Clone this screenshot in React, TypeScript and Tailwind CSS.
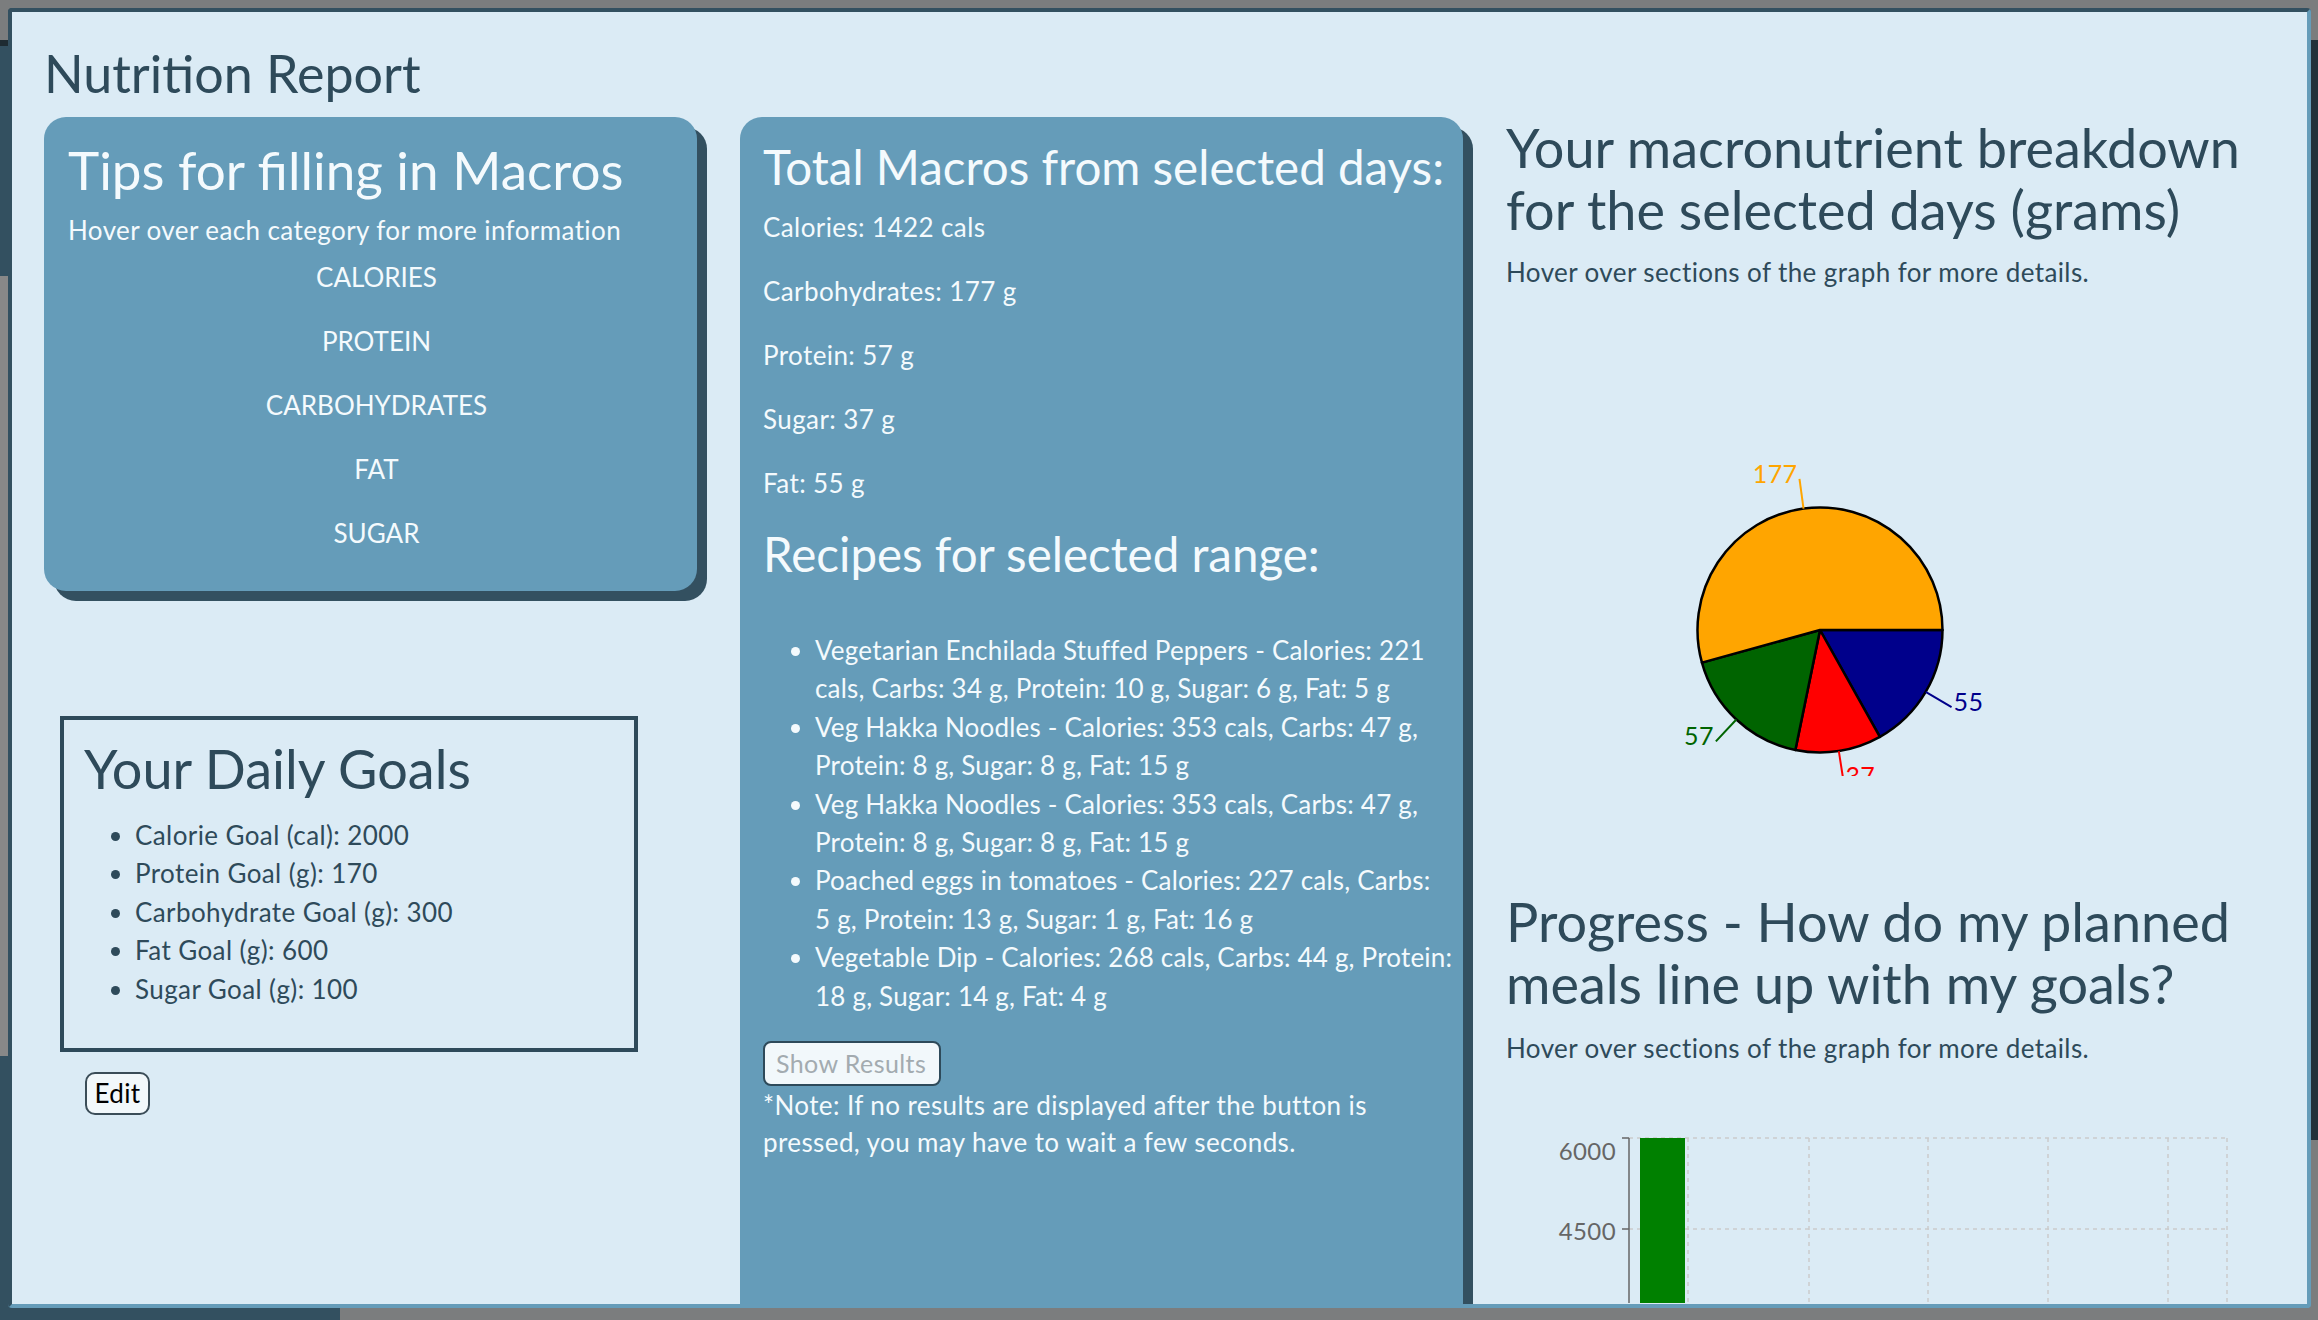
import React from 'react';

const CATEGORIES = ['CALORIES', 'PROTEIN', 'CARBOHYDRATES', 'FAT', 'SUGAR'];

const TOTALS = ['Calories: 1422 cals', 'Carbohydrates: 177 g', 'Protein: 57 g', 'Sugar: 37 g', 'Fat: 55 g'];

const GOALS = [
  'Calorie Goal (cal): 2000',
  'Protein Goal (g): 170',
  'Carbohydrate Goal (g): 300',
  'Fat Goal (g): 600',
  'Sugar Goal (g): 100',
];

// each recipe is split where the reference wraps it
const RECIPES = [
  ['Vegetarian Enchilada Stuffed Peppers - Calories: 221', 'cals, Carbs: 34 g, Protein: 10 g, Sugar: 6 g, Fat: 5 g'],
  ['Veg Hakka Noodles - Calories: 353 cals, Carbs: 47 g,', 'Protein: 8 g, Sugar: 8 g, Fat: 15 g'],
  ['Veg Hakka Noodles - Calories: 353 cals, Carbs: 47 g,', 'Protein: 8 g, Sugar: 8 g, Fat: 15 g'],
  ['Poached eggs in tomatoes - Calories: 227 cals, Carbs:', '5 g, Protein: 13 g, Sugar: 1 g, Fat: 16 g'],
  ['Vegetable Dip - Calories: 268 cals, Carbs: 44 g, Protein:', '18 g, Sugar: 14 g, Fat: 4 g'],
];

const SLICES = [
  { v: 55, c: '#00008b' },
  { v: 37, c: '#ff0000' },
  { v: 57, c: '#006400' },
  { v: 177, c: '#ffa500' },
];

function MacroPie() {
  const cx = 314, cy = 343, r = 122.5;
  const total = SLICES.reduce((s, x) => s + x.v, 0);
  const pt = (a: number, rr: number) => [cx + rr * Math.cos((a * Math.PI) / 180), cy + rr * Math.sin((a * Math.PI) / 180)];
  let acc = 0;
  const arcs = SLICES.map(s => {
    const a0 = acc;
    acc += (s.v / total) * 360;
    return { ...s, a0, a1: acc };
  });
  return (
    <svg width={756} height={489} className="block" fontFamily="Lato, sans-serif">
      {arcs.map(s => {
        const [x0, y0] = pt(s.a0, r);
        const [x1, y1] = pt(s.a1, r);
        const large = s.a1 - s.a0 > 180 ? 1 : 0;
        return (
          <path key={s.c} d={`M${cx},${cy} L${x0},${y0} A${r},${r} 0 ${large} 1 ${x1},${y1} Z`}
            fill={s.c} stroke="#000" strokeWidth={2.5} strokeLinejoin="round" />
        );
      })}
      {arcs.map(s => {
        const m = (s.a0 + s.a1) / 2;
        const [lx0, ly0] = pt(m, r);
        const [lx1, ly1] = pt(m, r + 30);
        const right = Math.cos((m * Math.PI) / 180) >= 0;
        return (
          <g key={'l' + s.c}>
            <line x1={lx0} y1={ly0} x2={lx1} y2={ly1} stroke={s.c} strokeWidth={2} />
            <text x={right ? lx1 + 2 : lx1 - 2} y={ly1 - 6} textAnchor={right ? 'start' : 'end'}
              dominantBaseline="central" fill={s.c} fontSize={25}>{s.v}</text>
          </g>
        );
      })}
    </svg>
  );
}

function ProgressChart() {
  const vx = [182, 303, 422, 542, 662, 721];
  return (
    <svg width={756} height={240} className="block" fontFamily="Lato, sans-serif">
      {vx.map(x => (
        <line key={x} x1={x} y1={75} x2={x} y2={240} stroke="#cccccc" strokeWidth={1.5} strokeDasharray="4 4" />
      ))}
      <line x1={123} y1={75} x2={721} y2={75} stroke="#cccccc" strokeWidth={1.5} strokeDasharray="4 4" />
      <line x1={123} y1={166} x2={721} y2={166} stroke="#cccccc" strokeWidth={1.5} strokeDasharray="4 4" />
      <rect x={134} y={75} width={45} height={170} fill="#008000" />
      <line x1={123} y1={75} x2={123} y2={240} stroke="#666" strokeWidth={1.5} />
      <line x1={116} y1={75} x2={123} y2={75} stroke="#666" strokeWidth={1.5} />
      <line x1={116} y1={166} x2={123} y2={166} stroke="#666" strokeWidth={1.5} />
      <text x={110} y={87} textAnchor="end" dominantBaseline="central" fill="#666" fontSize={24}>6000</text>
      <text x={110} y={167} textAnchor="end" dominantBaseline="central" fill="#666" fontSize={24}>4500</text>
    </svg>
  );
}

export default function App() {
  return (
    <div className="relative h-[1320px] w-[2318px] overflow-hidden bg-[#7b7d7e] font-['Lato',sans-serif]">
      {/* page under the modal */}
      <div className="flex h-full">
        <aside className="mt-[40px] flex w-[340px] flex-col border-t-[6px] border-[#1e2b32] bg-[#335060]">
          <div className="mt-[230px] h-[780px] w-[324px] bg-[#888888]" />
        </aside>
        <main className="flex flex-1 justify-end">
          <div className="mt-[40px] h-[1100px] w-[7px] bg-[#22323a]" />
        </main>
      </div>

      {/* modal */}
      <div className="absolute left-[8px] top-[8px] h-[1300px] w-[2303px] overflow-hidden rounded-[4px] border-4 border-t-[#335060] border-l-[#335060] border-r-[#659cb9] border-b-[#659cb9] bg-[#dbebf5] pl-[32px] pt-[31px] text-[#2e4a5a]">
        <h1 className="text-[52px] leading-[60px]">Nutrition Report</h1>

        <div className="mt-[14px] flex items-start gap-[43px] text-[26px] tracking-[0.4px]">
          {/* left column */}
          <div className="w-[653px]">
            <div className="rounded-[22px] bg-[#659cb9] px-[24px] pb-[26px] pt-[22px] text-[#f4fafd] shadow-[10px_10px_0_#335060]">
              <h2 className="text-[53px] leading-[62px] tracking-normal">Tips for filling in Macros</h2>
              <p className="mt-[14px] leading-[30px]">Hover over each category for more information</p>
              {CATEGORIES.map(c => (
                <div key={c} className="h-[64px] pl-[12px] text-center leading-[64px] tracking-normal">{c}</div>
              ))}
            </div>

            <div className="ml-[16px] mt-[125px] w-[578px] border-4 border-[#2e4a5a] px-[20px] pb-[40px] pt-[18px]">
              <h2 className="text-[54px] leading-[62px] tracking-normal">Your Daily Goals</h2>
              <ul className="mt-[16px] list-disc pl-[51px] leading-[38.4px]">
                {GOALS.map(g => <li key={g}>{g}</li>)}
              </ul>
            </div>

            <button className="ml-[41px] mt-[20px] h-[43px] w-[65px] rounded-[10px] border-2 border-[#3b4d58] bg-[#f2f8fb] text-[26px] text-black">Edit</button>
          </div>

          {/* middle column */}
          <div className="h-[1300px] w-[723px] rounded-t-[22px] bg-[#659cb9] pl-[23px] pr-[10px] pt-[23px] text-[#f4fafd] shadow-[10px_10px_0_#335060]">
            <h2 className="text-[47.5px] leading-[54px] tracking-normal">Total Macros from selected days:</h2>
            <div className="mt-[1px]">
              {TOTALS.map(t => <p key={t} className="h-[64px] leading-[64px]">{t}</p>)}
            </div>
            <h3 className="mt-[14px] text-[47.5px] leading-[50px] tracking-normal">Recipes for selected range:</h3>
            <ul className="mt-[52px] list-disc whitespace-nowrap pl-[52px] leading-[38.4px] tracking-[0.2px]">
              {RECIPES.map((r, i) => (
                <li key={i}>{r[0]}<br />{r[1]}</li>
              ))}
            </ul>
            <button disabled className="mt-[26px] h-[45px] w-[178px] rounded-[8px] border-2 border-[#2e4a5a] bg-[#f2f8fb] pl-[11px] text-left text-[25px] text-[#a3abb0]">Show Results</button>
            <p className="mt-[1px] max-w-[640px] leading-[37px]">*Note: If no results are displayed after the button is pressed, you may have to wait a few seconds.</p>
          </div>

          {/* right column */}
          <div className="w-[756px]">
            <h2 className="text-[54px] leading-[62px] tracking-normal">Your macronutrient breakdown<br />for the selected days (grams)</h2>
            <p className="mt-[16px] leading-[30px]">Hover over sections of the graph for more details.</p>
            <MacroPie />
            <h2 className="mt-[115px] text-[54px] leading-[62px] tracking-normal">Progress - How do my planned<br />meals line up with my goals?</h2>
            <p className="mt-[18px] leading-[30px]">Hover over sections of the graph for more details.</p>
            <ProgressChart />
          </div>
        </div>
      </div>
    </div>
  );
}
